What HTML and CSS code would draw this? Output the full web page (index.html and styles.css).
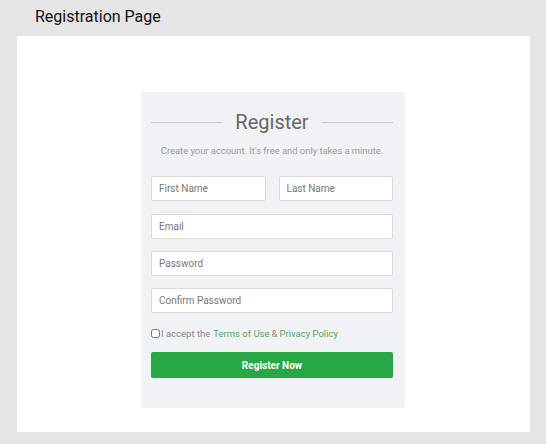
FILE: index.html
```html
<!DOCTYPE html>
<html>
<head>
<meta charset="utf-8">
<link rel="stylesheet" href="styles.css">
</head>
<body>
<div class="page-title">Registration Page</div>
<div class="panel">
  <form class="card">
    <div class="heading">
      <span class="rule"></span>
      <h2>Register</h2>
      <span class="rule"></span>
    </div>
    <p class="hint">Create your account. It's free and only takes a minute.</p>
    <div class="row two">
      <input class="field" type="text" placeholder="First Name">
      <input class="field" type="text" placeholder="Last Name">
    </div>
    <div class="row"><input class="field" type="email" placeholder="Email"></div>
    <div class="row r12"><input class="field" type="password" placeholder="Password"></div>
    <div class="row r12"><input class="field" type="password" placeholder="Confirm Password"></div>
    <label class="accept"><input type="checkbox" class="check">I accept the <a href="#">Terms of Use</a> &amp; <a href="#">Privacy Policy</a></label>
    <button type="button" class="btn">Register Now</button>
  </form>
</div>
</body>
</html>
```
FILE: styles.css
```css
* { box-sizing: border-box; }
html, body { margin: 0; padding: 0; }
body {
  background: #e5e5e5;
  font-family: Roboto, "Liberation Sans", sans-serif;
  width: 546px;
  height: 444px;
  overflow: hidden;
}
.page-title {
  font-size: 16px;
  color: #111;
  padding: 7px 0 0 35px;
  height: 36px;
  line-height: 20px;
}
.panel {
  margin-left: 17px;
  width: 513px;
  height: 396px;
  background: #fff;
  padding-top: 56px;
}
.card {
  width: 264px;
  height: 316px;
  margin-left: 124px;
  background: #f1f2f6;
  padding: 17px 12px 0 10px;
}
.heading {
  display: flex;
  align-items: center;
  gap: 13px;
  height: 26px;
}
.rule {
  flex: 1;
  height: 1px;
  background: #c8c8c8;
}
.heading h2 {
  margin: 0;
  font-weight: 400;
  font-size: 20px;
  color: #666;
  line-height: 26px;
}
.hint {
  margin: 10px 0 0;
  text-align: center;
  font-size: 9.4px;
  color: #999;
  line-height: 12px;
}
.row {
  display: flex;
  margin-top: 13px;
}
.row.r12 { margin-top: 12px; }
.row.two { margin-top: 19px; gap: 13px; }
.field {
  flex: 1;
  min-width: 0;
  height: 25px;
  border: 1px solid #dadada;
  border-radius: 2px;
  background: #fff;
  padding: 0 7px;
  font-family: inherit;
  font-size: 10px;
  color: #555;
}
.field::placeholder { color: #777; }
.accept {
  display: flex;
  align-items: center;
  margin-top: 14px;
  font-size: 9.5px;
  color: #888;
  height: 12px;
}
.accept a { color: #5aa55a; text-decoration: none; margin: 0 2px; }
.accept a:first-of-type { margin-left: 3px; }
.check {
  margin: 0 1px 0 0;
  width: 9px;
  height: 9px;
}
.btn {
  display: block;
  width: 100%;
  margin-top: 13px;
  height: 26px;
  border: none;
  border-radius: 2px;
  background: #28a745;
  color: #fff;
  font-family: inherit;
  font-weight: 700;
  font-size: 10px;
}
```
